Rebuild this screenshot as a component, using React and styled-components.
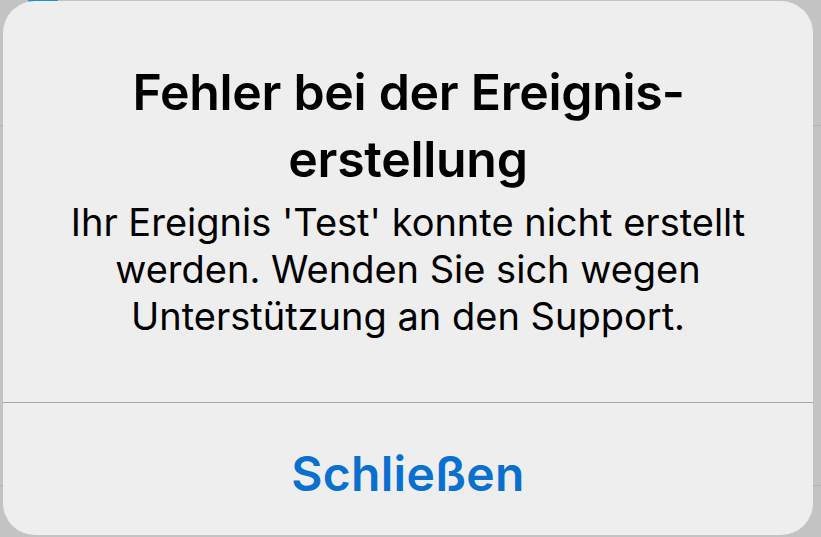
import React from 'react';
import styled, { createGlobalStyle } from 'styled-components';

const GlobalStyle = createGlobalStyle`
  html, body {
    margin: 0;
    padding: 0;
    background: #c3c3c3;
  }
  body {
    font-family: Inter, "Noto Sans", "Liberation Sans", sans-serif;
    -webkit-font-smoothing: antialiased;
  }
`;

const Screen = styled.div`
  position: relative;
  width: 821px;
  height: 537px;
  overflow: hidden;
  background: #c3c3c3;
`;

// dimmed list behind the alert
const Backdrop = styled.div`
  display: flex;
  flex-direction: column;
`;

const BackRow = styled.div`
  height: ${(p) => p.h}px;
  border-bottom: 1px solid #b3b3b3;
  display: flex;
  align-items: ${(p) => (p.top ? 'flex-start' : 'flex-end')};
  gap: 24px;
  padding-left: 28px;
  box-sizing: border-box;
`;

const BackIcon = styled.div`
  width: 30px;
  height: 3px;
  background: #1d93c9;
  border-radius: 0 0 6px 6px;
`;

const Alert = styled.div`
  position: absolute;
  left: 3px;
  top: 1px;
  width: 810px;
  height: 534px;
  background: #eeeeee;
  border-radius: 32px;
  display: flex;
  flex-direction: column;
  overflow: hidden;
`;

const Content = styled.div`
  flex: 0 0 402px;
  display: flex;
  flex-direction: column;
  align-items: center;
  padding: 58px 40px 0;
  box-sizing: border-box;
  border-bottom: 1px solid #a9a9a9;
`;

const Title = styled.h2`
  margin: 0;
  font-size: 50px;
  line-height: 67px;
  font-weight: 600;
  letter-spacing: -0.3px;
  color: #000;
  text-align: center;
  width: 620px;
`;

const Message = styled.p`
  margin: 6px 0 0;
  font-size: 38px;
  line-height: 47px;
  font-weight: 400;
  letter-spacing: 0;
  color: #000;
  text-align: center;
  width: 740px;
`;

const ActionButton = styled.button`
  flex: 1;
  border: none;
  background: transparent;
  font-family: inherit;
  font-size: 48px;
  font-weight: 600;
  letter-spacing: 0.3px;
  color: #0a70cf;
  display: flex;
  align-items: center;
  justify-content: center;
  padding: 8px 0 0;
  cursor: pointer;
`;

export default function App() {
  return (
    <Screen>
      <GlobalStyle />
      <Backdrop>
        <BackRow h={126} top>
          <BackIcon />
        </BackRow>
        <BackRow h={360} />
      </Backdrop>
      <Alert>
        <Content>
          <Title>Fehler bei der Ereignis&shy;erstellung</Title>
          <Message>
            Ihr Ereignis 'Test' konnte nicht erstellt werden. Wenden Sie sich wegen Unterstützung an den Support.
          </Message>
        </Content>
        <ActionButton>Schließen</ActionButton>
      </Alert>
    </Screen>
  );
}
